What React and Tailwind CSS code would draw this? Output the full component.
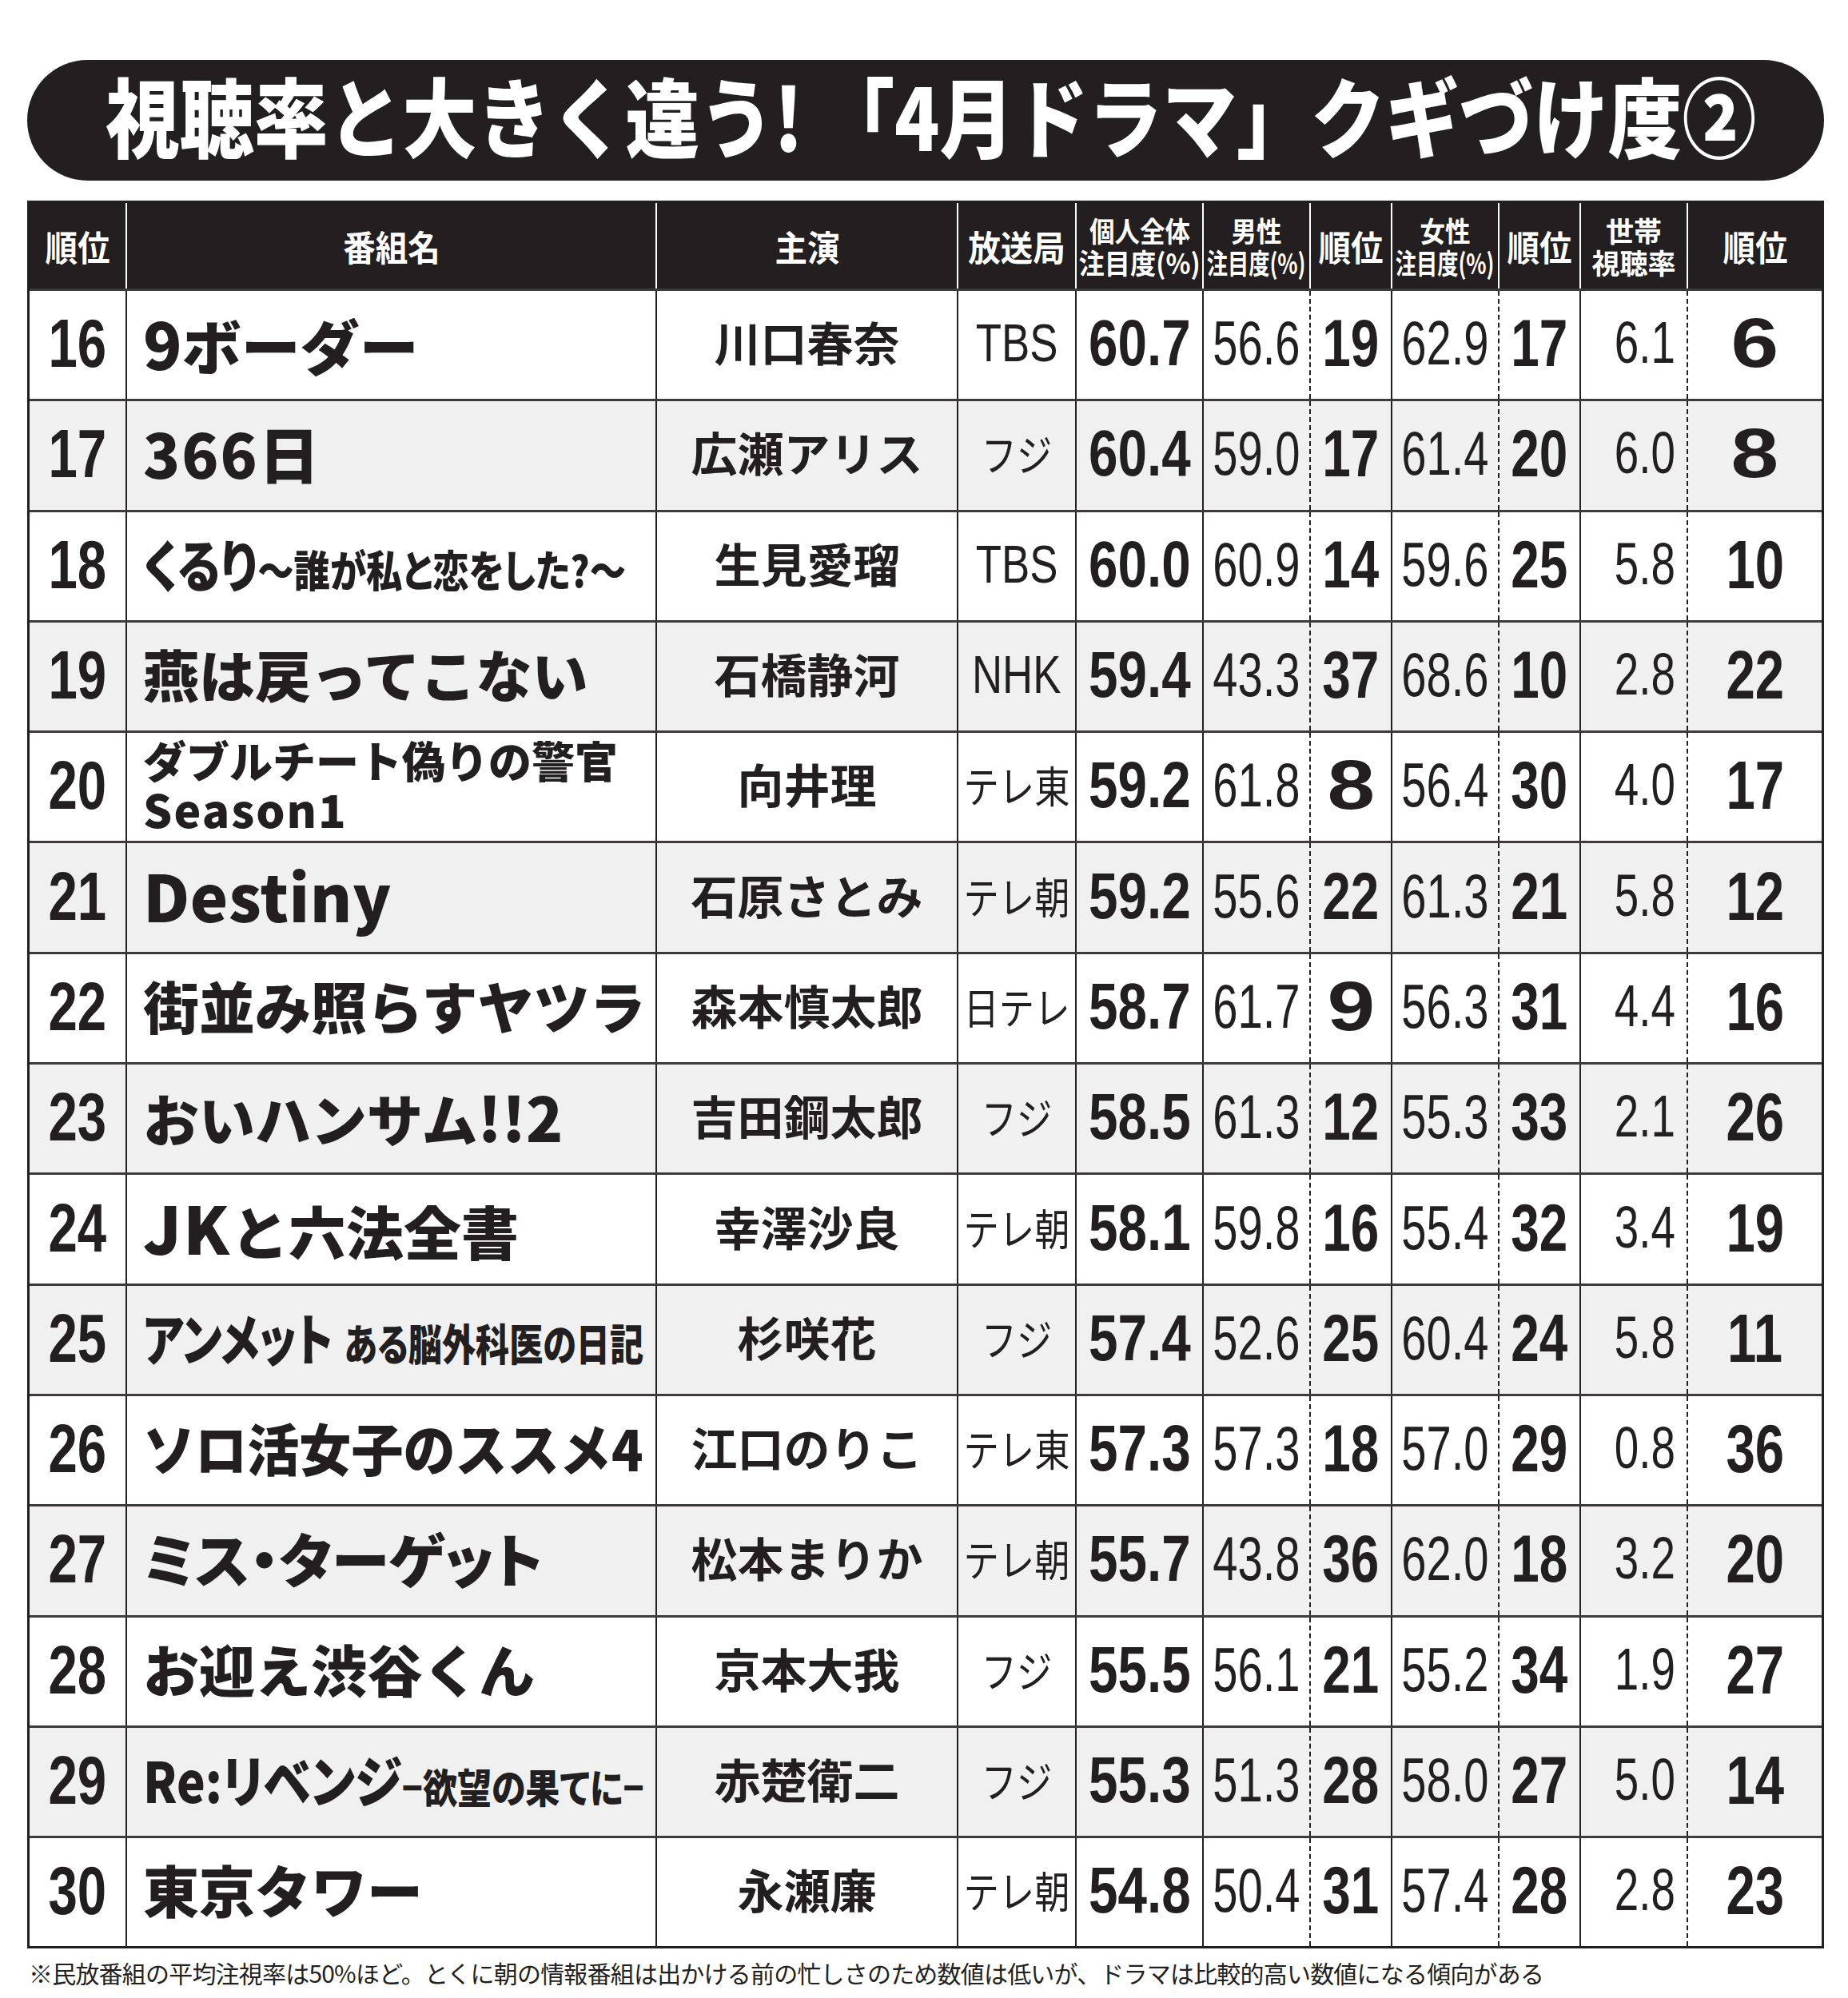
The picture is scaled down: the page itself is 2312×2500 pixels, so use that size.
import React from 'react';

const JP = "font-['Noto_Sans_CJK_JP',sans-serif]";
const NUM = "font-['Liberation_Sans','Noto_Sans_CJK_JP',sans-serif]";

const COLS = 'grid-cols-[120px_663px_377px_148px_159px_134px_102px_134px_102px_134px_169px]';

const rows = [
    { rank: 16, title: 'border', actor: '川口春奈', tv: 'TBS', all: '60.7', male: '56.6', mr: 19, female: '62.9', fr: 17, house: '6.1', hr: 6 },
    { rank: 17, title: '366', actor: '広瀬アリス', tv: 'フジ', all: '60.4', male: '59.0', mr: 17, female: '61.4', fr: 20, house: '6.0', hr: 8 },
    { rank: 18, title: 'kururi', actor: '生見愛瑠', tv: 'TBS', all: '60.0', male: '60.9', mr: 14, female: '59.6', fr: 25, house: '5.8', hr: 10 },
    { rank: 19, title: '燕は戻ってこない', actor: '石橋静河', tv: 'NHK', all: '59.4', male: '43.3', mr: 37, female: '68.6', fr: 10, house: '2.8', hr: 22 },
    { rank: 20, title: 'double', actor: '向井理', tv: 'テレ東', all: '59.2', male: '61.8', mr: 8, female: '56.4', fr: 30, house: '4.0', hr: 17 },
    { rank: 21, title: 'destiny', actor: '石原さとみ', tv: 'テレ朝', all: '59.2', male: '55.6', mr: 22, female: '61.3', fr: 21, house: '5.8', hr: 12 },
    { rank: 22, title: '街並み照らすヤツラ', actor: '森本慎太郎', tv: '日テレ', all: '58.7', male: '61.7', mr: 9, female: '56.3', fr: 31, house: '4.4', hr: 16 },
    { rank: 23, title: 'handsome', actor: '吉田鋼太郎', tv: 'フジ', all: '58.5', male: '61.3', mr: 12, female: '55.3', fr: 33, house: '2.1', hr: 26 },
    { rank: 24, title: 'jk', actor: '幸澤沙良', tv: 'テレ朝', all: '58.1', male: '59.8', mr: 16, female: '55.4', fr: 32, house: '3.4', hr: 19 },
    { rank: 25, title: 'unmet', actor: '杉咲花', tv: 'フジ', all: '57.4', male: '52.6', mr: 25, female: '60.4', fr: 24, house: '5.8', hr: 11 },
    { rank: 26, title: 'solo', actor: '江口のりこ', tv: 'テレ東', all: '57.3', male: '57.3', mr: 18, female: '57.0', fr: 29, house: '0.8', hr: 36 },
    { rank: 27, title: 'target', actor: '松本まりか', tv: 'テレ朝', all: '55.7', male: '43.8', mr: 36, female: '62.0', fr: 18, house: '3.2', hr: 20 },
    { rank: 28, title: 'お迎え渋谷くん', actor: '京本大我', tv: 'フジ', all: '55.5', male: '56.1', mr: 21, female: '55.2', fr: 34, house: '1.9', hr: 27 },
    { rank: 29, title: 'revenge', actor: '赤楚衛二', tv: 'フジ', all: '55.3', male: '51.3', mr: 28, female: '58.0', fr: 27, house: '5.0', hr: 14 },
    { rank: 30, title: '東京タワー', actor: '永瀬廉', tv: 'テレ朝', all: '54.8', male: '50.4', mr: 31, female: '57.4', fr: 28, house: '2.8', hr: 23 },
];

const PALT = "[font-feature-settings:'palt']";

const Title = ({ title }) => {
    switch (title) {
        case 'border':
            return (
                <span className="whitespace-nowrap">
                    <span className="text-[80px]">9</span>
                    <span className="text-[74px]">ボーダー</span>
                </span>
            );
        case '366':
            return <span className="text-[76px] tracking-[2px] whitespace-nowrap">366日</span>;
        case 'kururi':
            return (
                <span className={`inline-block w-[760px] origin-left scale-x-[0.84] whitespace-nowrap ${PALT}`}>
                    <span className="text-[70px]">くるり</span>
                    <span className="text-[54px]">〜誰が私と恋をした?〜</span>
                </span>
            );
        case 'double':
            return (
                <div className="text-[54px] leading-[60px]">
                    <div className="whitespace-nowrap">ダブルチート偽りの警官</div>
                    <div className="text-[57px] tracking-[2px]">Season1</div>
                </div>
            );
        case 'destiny':
            return <span className="text-[80px] tracking-[0.5px]">Destiny</span>;
        case 'handsome':
            return (
                <span className="whitespace-nowrap">
                    <span className="text-[70px]">おいハンサム</span>
                    <span className="text-[76px]">!!2</span>
                </span>
            );
        case 'jk':
            return (
                <span className="whitespace-nowrap">
                    <span className="text-[82px] tracking-[2px]">JK</span>
                    <span className="text-[72px]">と六法全書</span>
                </span>
            );
        case 'unmet':
            return (
                <span className={`inline-block w-[820px] origin-left scale-x-[0.78] whitespace-nowrap ${PALT}`}>
                    <span className="text-[70px]">アンメット</span>
                    <span className="text-[54px] ml-[18px]">ある脳外科医の日記</span>
                </span>
            );
        case 'solo':
            return (
                <span className="inline-block w-[680px] origin-left scale-x-[0.93] whitespace-nowrap text-[70px]">
                    ソロ活女子のススメ4
                </span>
            );
        case 'target':
            return <span className={`text-[73px] whitespace-nowrap ${PALT}`}>ミス・ターゲット</span>;
        case 'revenge':
            return (
                <span className={`inline-block w-[740px] origin-left scale-x-[0.86] whitespace-nowrap ${PALT}`}>
                    <span className="text-[70px]">Re:リベンジ</span>
                    <span className="text-[50px]">−欲望の果てに−</span>
                </span>
            );
        default:
            return <span className="text-[70px] whitespace-nowrap">{title}</span>;
    }
};

const Num = ({ v, bold, size, scale }) => (
    <span className={`inline-block ${NUM} leading-none ${bold ? 'font-bold' : 'font-normal'} ${size} ${scale}`}>
        {v}
    </span>
);

const Rank = ({ v, size = 'text-[84px]' }) =>
    v >= 10 ? (
        <Num v={v} bold size={size} scale="scale-x-[0.76]" />
    ) : (
        <Num v={v} bold size="text-[88px]" scale="scale-x-[1.22]" />
    );

const HeadCell = ({ children }) => (
    <div className="flex flex-col items-center justify-center border-l-2 border-white text-white">
        {children}
    </div>
);

const HeadOne = ({ text }) => (
    <span className={`inline-block ${JP} font-bold text-[44px] leading-none scale-x-[0.92]`}>{text}</span>
);

const HeadTwo = ({ a, b, sa = 'scale-x-[0.9]', sb = 'scale-x-[0.88]' }) => (
    <div className={`flex flex-col items-center ${JP} font-bold text-[35px] leading-[40px]`}>
        <span className={`inline-block whitespace-nowrap ${sa}`}>{a}</span>
        <span className={`inline-block whitespace-nowrap ${sb}`}>{b}</span>
    </div>
);

const Cell = ({ children, className = '' }) => (
    <div className={`flex items-center justify-center pb-[5px] border-l-2 border-[#231f20] ${className}`}>
        {children}
    </div>
);

const Row = ({ r, i }) => {
    const bg = i % 2 === 1 ? 'bg-[#f0f0f0]' : 'bg-white';
    const isJpTv = /[^A-Z]/.test(r.tv);
    return (
        <div className={`grid ${COLS} h-[138.3px] border-t-[3px] border-[#3e3a39] ${bg} text-[#231f20]`}>
            <div className="flex items-center justify-center pb-[5px]">
                <Rank v={r.rank} size="text-[86px]" />
            </div>
            <div className={`flex items-center pl-[20px] pb-[8px] border-l-2 border-[#231f20] ${JP} font-black`}>
                <Title title={r.title} />
            </div>
            <Cell className={`${JP} font-bold text-[58px] pb-[8px]`}>{r.actor}</Cell>
            <Cell>
                {isJpTv ? (
                    <span className={`inline-block ${JP} font-normal text-[54px] leading-none scale-x-[0.82] whitespace-nowrap`}>{r.tv}</span>
                ) : (
                    <Num v={r.tv} size="text-[66px]" scale="scale-x-[0.8]" />
                )}
            </Cell>
            <Cell>
                <Num v={r.all} bold size="text-[82px]" scale="scale-x-[0.8]" />
            </Cell>
            <Cell>
                <Num v={r.male} size="text-[78px]" scale="scale-x-[0.72]" />
            </Cell>
            <Cell className="border-dashed">
                <Rank v={r.mr} />
            </Cell>
            <Cell>
                <Num v={r.female} size="text-[78px]" scale="scale-x-[0.72]" />
            </Cell>
            <Cell className="border-dashed">
                <Rank v={r.fr} />
            </Cell>
            <Cell className="justify-end pr-[14px]">
                <span className={`inline-block origin-right ${NUM} font-normal leading-none text-[74px] scale-x-[0.74]`}>{r.house}</span>
            </Cell>
            <Cell className="border-dashed">
                <Rank v={r.hr} size="text-[86px]" />
            </Cell>
        </div>
    );
};

export default function App() {
    return (
        <div className="w-[2312px] min-h-[2500px] bg-white pt-[75px] pl-[34px]">
            <div className="w-[2248px]">
                {/* Title */}
                <div className="h-[151px] rounded-full bg-[#231f20] flex items-center justify-center">
                    <span className={`inline-block ${JP} font-black text-white text-[108px] leading-none scale-x-[0.86] whitespace-nowrap -mt-[18px] ml-[14px]`}>
                        視聴率と大きく違う! 「4月ドラマ」クギづけ度②
                    </span>
                </div>

                {/* Table */}
                <div className="mt-[25px] border-[3px] border-[#231f20]">
                    <div className={`grid ${COLS} h-[107px] bg-[#231f20]`}>
                        <div className="flex items-center justify-center text-white">
                            <HeadOne text="順位" />
                        </div>
                        <HeadCell><HeadOne text="番組名" /></HeadCell>
                        <HeadCell><HeadOne text="主演" /></HeadCell>
                        <HeadCell><HeadOne text="放送局" /></HeadCell>
                        <HeadCell><HeadTwo a="個人全体" b="注目度(%)" sb="scale-x-[0.92]" /></HeadCell>
                        <HeadCell><HeadTwo a="男性" b="注目度(%)" sb="scale-x-[0.75]" /></HeadCell>
                        <HeadCell><HeadOne text="順位" /></HeadCell>
                        <HeadCell><HeadTwo a="女性" b="注目度(%)" sb="scale-x-[0.75]" /></HeadCell>
                        <HeadCell><HeadOne text="順位" /></HeadCell>
                        <HeadCell><HeadTwo a="世帯" b="視聴率" sa="scale-x-[1]" sb="scale-x-[1]" /></HeadCell>
                        <HeadCell><HeadOne text="順位" /></HeadCell>
                    </div>
                    {rows.map((r, i) => (
                        <Row key={r.rank} r={r} i={i} />
                    ))}
                </div>

                {/* Footnote */}
                <p className={`mt-[12px] ml-[2px] ${JP} text-[30px] leading-[36px] text-[#231f20] tracking-[-0.8px] whitespace-nowrap`}>
                    ※民放番組の平均注視率は50%ほど。とくに朝の情報番組は出かける前の忙しさのため数値は低いが、ドラマは比較的高い数値になる傾向がある
                </p>
            </div>
        </div>
    );
}
